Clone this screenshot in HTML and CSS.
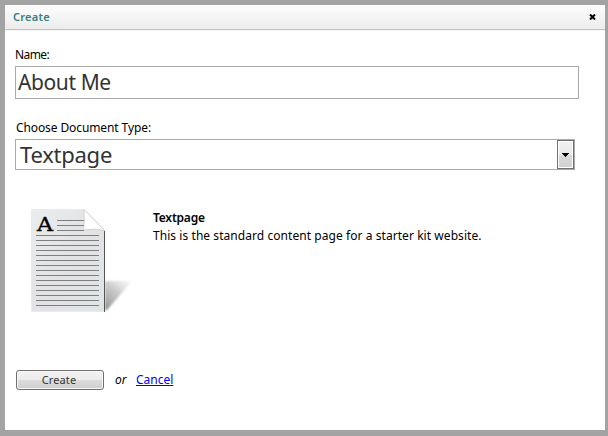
FILE: index.html
```
<!DOCTYPE html>
<html lang="en">
<head>
<meta charset="utf-8">
<title>Create</title>
<link rel="stylesheet" href="styles.css">
</head>
<body>
<main class="dialog">
  <header class="titlebar">
    <h1 class="title">Create</h1>
    <svg class="close" width="7" height="6" viewBox="0 0 7 6" aria-label="Close"><path d="M1 .5L6 5.5M6 .5L1 5.5" stroke="#000" stroke-width="2"/></svg>
  </header>
  <form class="form">
    <label class="label label-name">Name:</label>
    <div class="field"><span class="value value-name">About Me</span></div>
    <label class="label label-type">Choose Document Type:</label>
    <div class="field select">
      <span class="value value-type">Textpage</span>
      <span class="drop"><svg width="7" height="4" viewBox="0 0 7 4" shape-rendering="crispEdges"><path d="M0 0h7v1H6v1H5v1H4v1H3V3H2V2H1V1H0z"/></svg></span>
    </div>
    <section class="preview">
      <svg class="page" width="109" height="112" viewBox="0 0 109 112">
        <defs>
          <linearGradient id="paper" x1="0" y1="0" x2="1" y2="1"><stop offset="0" stop-color="#e9eded"/><stop offset=".5" stop-color="#e3e2e4"/><stop offset="1" stop-color="#e0e5e4"/></linearGradient>
          <linearGradient id="shade" gradientUnits="userSpaceOnUse" x1="76" y1="102" x2="98" y2="74"><stop offset="0" stop-color="#777" stop-opacity=".8"/><stop offset=".6" stop-color="#999" stop-opacity=".5"/><stop offset="1" stop-color="#bbb" stop-opacity=".15"/></linearGradient>
          <linearGradient id="fold" x1="0" y1="1" x2=".7" y2=".3"><stop offset="0" stop-color="#fff"/><stop offset=".7" stop-color="#fff"/><stop offset="1" stop-color="#ddd"/></linearGradient>
          <filter id="soft" x="-20%" y="-20%" width="140%" height="140%"><feGaussianBlur stdDeviation="1.2"/></filter>
        </defs>
        <path d="M76 74H103L78 103H76z" fill="url(#shade)" filter="url(#soft)"/>
        <path d="M2.500 2.500H55L75.500 23V104.500H2.500z" fill="url(#paper)" stroke="#e8ecec"/>
        <path d="M75.500 24V105" stroke="#555"/>
        <path d="M55 2.500L75.500 23.500Q64 21 54.500 23Q56 12 55 2.500z" fill="url(#fold)" stroke="#ccc" stroke-width=".8"/>
        <path d="M28 13.500H55M28 18.500H55M28 23.500H55M7 28.500H70M7 33.500H70M7 38.500H70M7 43.500H70M7 48.500H70M7 53.500H70M7 58.500H70M7 63.500H70M7 68.500H70M7 73.500H70M7 78.500H70M7 83.500H70M7 88.500H70M7 93.500H70M7 98.500H70" stroke="#7d8081"/>
        <text class="letter" x="8" y="24" textLength="16" lengthAdjust="spacingAndGlyphs">A</text>
      </svg>
      <div class="description">
        <strong class="name">Textpage</strong>
        <span class="details">This is the standard content page for a starter kit website.</span>
      </div>
    </section>
    <footer class="actions">
      <button class="create" type="button">Create</button>
      <em class="or">or</em>
      <a class="cancel" href="#">Cancel</a>
    </footer>
  </form>
</main>
</body>
</html>
```
FILE: styles.css
```
* { box-sizing: border-box; }
body {
  margin: 0;
  height: 436px;
  padding: 5px 3px 6px 5px;
  overflow: hidden;
  background: #a3a3a3;
  color: #000;
  font: 12px/16px "Trebuchet MS", "Noto Sans", sans-serif;
}
.dialog { height: 425px; background: #fff; }
.titlebar {
  height: 25px;
  padding: 0 9px 0 8px;
  display: flex;
  align-items: center;
  justify-content: space-between;
  background: linear-gradient(#fdfdfd, #ececec);
  border-bottom: 1px solid #c4c4c4;
  box-shadow: 0 1px #f3f3f3;
}
.title { margin: 0; font-size: 11px; line-height: 16px; font-weight: 600; letter-spacing: .25px; color: #378080; }
.form { padding: 17px 0 0 10px; }
.label { display: block; height: 19px; }
.label-name { letter-spacing: -.6px; }
.label-type { margin: 21px 0 0 1px; letter-spacing: -.1px; }
.field {
  width: 564px;
  height: 33px;
  display: flex;
  align-items: center;
  border: 1px solid #a9a9ae;
  color: #333;
}
.select { width: 560px; height: 31px; justify-content: space-between; }
.value { font-size: 22px; line-height: 29px; }
.value-name { padding-left: 2px; font-size: 21px; letter-spacing: -.4px; }
.value-type { padding-left: 4px; letter-spacing: -.25px; }
.drop {
  width: 17px;
  height: 29px;
  display: grid;
  place-items: center;
  border: 1px solid #707070;
  box-shadow: inset 0 0 0 1px #fff;
  background: linear-gradient(#f2f2f2, #e8e8e8 50%, #dadada 50%, #d0d0d0);
}
.preview { display: flex; margin-top: 37px; padding-left: 14px; height: 112px; }
.page { flex: none; }
.letter { font: 19px "DejaVu Serif", serif; fill: #000; stroke: #000; stroke-width: .4px; }
.description { padding: 3px 0 0 15px; display: flex; flex-direction: column; gap: 2px; }
.name { font-weight: 600; letter-spacing: -.2px; }
.details { white-space: nowrap; letter-spacing: .06px; }
.actions { display: flex; align-items: center; margin: 51px 0 0 1px; height: 20px; }
.create {
  width: 88px;
  height: 20px;
  padding: 0 2px 0 0;
  border: 1px solid #707070;
  border-radius: 3px;
  box-shadow: inset 0 0 0 1px #f8f8f8;
  background: linear-gradient(#f2f2f2, #ebebeb 50%, #dcdcdc 50%, #cfcfcf);
  color: #333;
  font: inherit;
  font-size: 11px;
  line-height: 16px;
  letter-spacing: .15px;
}
.or { margin-left: 11px; width: 21px; }
.cancel { color: #00f; }
```
